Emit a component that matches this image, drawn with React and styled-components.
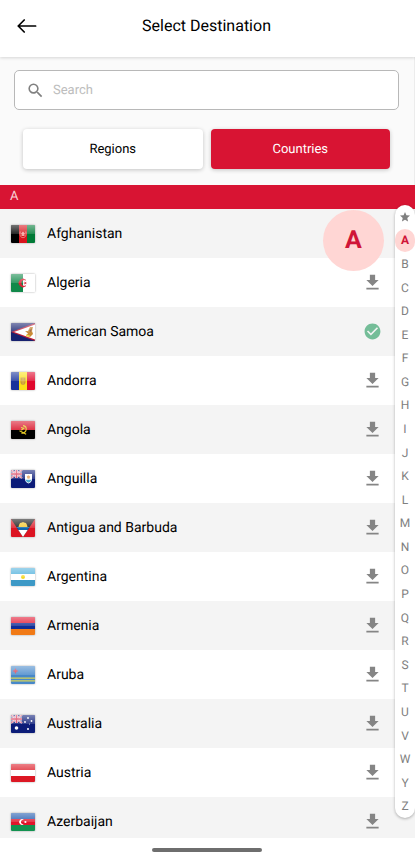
import React, { useState } from 'react';
import styled, { createGlobalStyle } from 'styled-components';
import { MdSearch, MdFileDownload, MdCheckCircle, MdStar } from 'react-icons/md';

const countries = [
  { name: 'Afghanistan', flag: 'af' },
  { name: 'Algeria', flag: 'dz' },
  { name: 'American Samoa', flag: 'as', downloaded: true },
  { name: 'Andorra', flag: 'ad' },
  { name: 'Angola', flag: 'ao' },
  { name: 'Anguilla', flag: 'ai' },
  { name: 'Antigua and Barbuda', flag: 'ag' },
  { name: 'Argentina', flag: 'ar' },
  { name: 'Armenia', flag: 'am' },
  { name: 'Aruba', flag: 'aw' },
  { name: 'Australia', flag: 'au' },
  { name: 'Austria', flag: 'at' },
  { name: 'Azerbaijan', flag: 'az' },
];

const letters = 'ABCDEFGHIJKLMNOPQRSTUVWYZ'.split('');

const Bars = ({ colors, vertical }) =>
  colors.map((color, i) =>
    vertical ? (
      <rect key={i} x={i * (24 / colors.length)} width={24 / colors.length} height="18" fill={color} />
    ) : (
      <rect key={i} y={i * (18 / colors.length)} width="24" height={18 / colors.length} fill={color} />
    )
  );

const UnionJack = () => (
  <>
    <path d="M0 0L11 8M11 0L0 8" stroke="#f3dfe8" strokeWidth="2" />
    <path d="M0 0L11 8M11 0L0 8" stroke="#d5304f" strokeWidth="0.8" />
    <path d="M5.5 0V8M0 4H11" stroke="#f3dfe8" strokeWidth="2.8" />
    <path d="M5.5 0V8M0 4H11" stroke="#d5304f" strokeWidth="1.5" />
  </>
);

const flags = {
  af: (
    <>
      <Bars vertical colors={['#000', '#d8141c', '#007a36']} />
      <path d="M9.2 6.5C8.4 11 10 12.6 12 12.6S15.6 11 14.8 6.5" fill="none" stroke="#f08a86" strokeWidth="1" />
      <path d="M10.5 11V8.2L12 6.6L13.5 8.2V11Z" fill="#f4a9a4" />
    </>
  ),
  dz: (
    <>
      <Bars vertical colors={['#11894a', '#fff']} />
      <path d="M14.8 6.2A4 4 0 1 0 14.8 11.8A3.2 3.2 0 1 1 14.8 6.2Z" fill="#dc2438" stroke="#dc2438" strokeWidth="0.6" />
      <path d="M12.2 9L15.8 7.8L13.6 10.8V7.2L15.8 10.2Z" fill="#dc2438" />
    </>
  ),
  as: (
    <>
      <rect width="24" height="18" fill="#17216f" />
      <path d="M24 0L0 9L24 18Z" fill="#bd1d36" />
      <path d="M24 1.4L3 9L24 16.6Z" fill="#fff" />
      <path d="M14 8L17 8L19 4L22 4L21 8L22 11L19 14L15 12.6L17 10.5Z" fill="#c98b35" />
      <path d="M15 11.4L19 12.6L18 14.2L15 13Z" fill="#f1d54b" />
      <path d="M18 8L21 5L20 9Z" fill="#8b4a20" />
    </>
  ),
  ad: (
    <>
      <Bars vertical colors={['#17339b', '#fbe018', '#e0082d']} />
      <path d="M9.5 5.5H14.5V10.5Q14.5 12.5 12 13Q9.5 12.5 9.5 10.5Z" fill="#c99a3b" />
      <path d="M12 6V12.5M10 9H14" stroke="#e7c24a" strokeWidth="0.7" />
    </>
  ),
  ao: (
    <>
      <Bars colors={['#d81126', '#000']} />
      <path d="M12 4.6C17 5.5 16 12 10.5 12.4M8.5 9.8L15.2 13.2M10 6.5L12.8 7.2L10.3 9.2" fill="none" stroke="#e5ca25" strokeWidth="1.1" />
    </>
  ),
  ai: (
    <>
      <rect width="24" height="18" fill="#0c1c78" />
      <UnionJack />
      <path d="M14 4H21V9Q21 12 17.5 13.5Q14 12 14 9Z" fill="#fff" />
      <path d="M14.4 9.8H20.6Q20 12 17.5 12.8Q15 12 14.4 9.8Z" fill="#52add0" />
      <path d="M15.8 6.2L17.5 5.2L19.2 6.4L18.4 8.7L16.4 8.5Z" fill="#e6a05b" />
    </>
  ),
  ag: (
    <>
      <rect width="24" height="18" fill="#dc1422" />
      <path d="M0 0H24L12 18Z" fill="#101010" />
      <path d="M5.3 8H18.7L16.7 11H7.3Z" fill="#1168ad" />
      <path d="M7.3 11H16.7L12 18Z" fill="#fff" />
      <path d="M7.5 8L8 6L9 4L11 3.6L12 3L13 3.6L15 4L16 6L16.5 8Z" fill="#f5c92c" />
    </>
  ),
  ar: (
    <>
      <Bars colors={['#4eb0dc', '#fff', '#3d99c6']} />
      <circle cx="12" cy="9" r="2" fill="#f5d928" />
    </>
  ),
  am: <Bars colors={['#e1112d', '#102d96', '#f17a16']} />,
  aw: (
    <>
      <rect width="24" height="18" fill="#4788ca" />
      <path d="M0 12.2H24M0 14.8H24" stroke="#d8d35a" strokeWidth="1.2" />
      <path d="M4.5 2.4L5.3 4.2L7.1 5L5.3 5.8L4.5 7.6L3.7 5.8L1.9 5L3.7 4.2Z" fill="#e03546" stroke="#e03546" strokeWidth="0.3" />
    </>
  ),
  au: (
    <>
      <rect width="24" height="18" fill="#0c1c78" />
      <UnionJack />
      <g fill="#fff">
        <circle cx="5.5" cy="13" r="1.8" />
        <circle cx="17" cy="3" r="0.9" />
        <circle cx="14" cy="7" r="0.9" />
        <circle cx="20.5" cy="6" r="0.9" />
        <circle cx="18.5" cy="9" r="0.5" />
        <circle cx="17" cy="14" r="1" />
      </g>
    </>
  ),
  at: <Bars colors={['#dc1824', '#fff', '#dc1824']} />,
  az: (
    <>
      <Bars colors={['#1f58ad', '#e1152b', '#139250']} />
      <path d="M13 7A2.8 2.8 0 1 0 13 11A2.2 2.2 0 1 1 13 7Z" fill="#fff" />
      <circle cx="14.4" cy="9" r="1.1" fill="#fff" />
    </>
  ),
};

const App = () => {
  const [query, setQuery] = useState('');
  const [tab, setTab] = useState('countries');
  const [active, setActive] = useState('A');

  return (
    <Screen>
      <GlobalStyle />
      <Header>
        <BackButton aria-label="Back">
          <svg width="20" height="16" viewBox="0 0 20 16" fill="none" stroke="#000" strokeWidth="1.7" strokeLinecap="round" strokeLinejoin="round">
            <path d="M18.6 8H1.5M7.2 2L1.2 8L7.2 14" />
          </svg>
        </BackButton>
        <Title>Select Destination</Title>
      </Header>

      <Filters>
        <SearchBox>
          <MdSearch size={19} />
          <SearchInput
            type="text"
            aria-label="Search"
            placeholder="Search"
            value={query}
            onChange={(e) => setQuery(e.target.value)}
          />
        </SearchBox>
        <Tabs>
          <TabButton $active={tab === 'regions'} onClick={() => setTab('regions')}>Regions</TabButton>
          <TabButton $active={tab === 'countries'} onClick={() => setTab('countries')}>Countries</TabButton>
        </Tabs>
      </Filters>

      <SectionTitle>A</SectionTitle>

      <ListArea>
        <CountryList>
          {countries.map((country) => (
            <CountryRow key={country.name}>
              <Flag>
                <svg width="24" height="18" viewBox="0 0 24 18" aria-hidden="true">
                  {flags[country.flag]}
                </svg>
              </Flag>
              <CountryName>{country.name}</CountryName>
              {country.downloaded ? (
                <RowAction $done aria-label={`${country.name} downloaded`}>
                  <MdCheckCircle size={19} />
                </RowAction>
              ) : (
                <RowAction aria-label={`Download ${country.name}`}>
                  <MdFileDownload size={21} />
                </RowAction>
              )}
            </CountryRow>
          ))}
        </CountryList>
        <LetterBubble>{active}</LetterBubble>
        <LetterIndex aria-label="Alphabet">
          <IndexItem aria-label="Favourites">
            <MdStar size={12} />
          </IndexItem>
          {letters.map((letter) => (
            <IndexItem key={letter} $active={letter === active} onClick={() => setActive(letter)}>
              {letter}
            </IndexItem>
          ))}
        </LetterIndex>
      </ListArea>

      <Footer>
        <HomeBar />
      </Footer>
    </Screen>
  );
};

export default App;

const GlobalStyle = createGlobalStyle`
  * {
    box-sizing: border-box;
  }

  body {
    margin: 0;
    background-color: #fff;
    font-family: Roboto, 'Liberation Sans', sans-serif;
    color: #000;
    text-rendering: geometricPrecision;
  }

  button,
  input {
    font-family: inherit;
    text-rendering: inherit;
  }
`;

const Screen = styled.div`
  display: flex;
  flex-direction: column;
  height: 100vh;
  overflow: hidden;
`;

const Header = styled.header`
  display: grid;
  grid-template-columns: 40px 1fr 40px;
  align-items: center;
  height: 57px;
  flex-shrink: 0;
  padding: 0 9px 6px 7px;
  background-color: #fff;
  box-shadow: 0 1px 3px rgba(0, 0, 0, 0.15);
  z-index: 1;
`;

const BackButton = styled.button`
  display: flex;
  justify-content: center;
  padding: 8px 0;
  border: none;
  background: none;
  cursor: pointer;
`;

const Title = styled.h1`
  margin: 0;
  font-size: 16px;
  font-weight: 400;
  line-height: 24px;
  text-align: center;
`;

const Filters = styled.div`
  display: flex;
  flex-direction: column;
  gap: 19px;
  flex-shrink: 0;
  padding: 13px 15px 16px 14px;
  background-color: #fafafa;
  border-right: 1px solid #ececec;
`;

const SearchBox = styled.label`
  display: flex;
  align-items: center;
  gap: 8px;
  height: 40px;
  padding: 0 11px;
  border: 1px solid #b8b8b8;
  border-radius: 5px;
  background-color: #fff;
  color: #808080;
`;

const SearchInput = styled.input`
  flex: 1;
  min-width: 0;
  padding: 0;
  border: none;
  outline: none;
  background: none;
  font-size: 13px;

  &::placeholder {
    color: #bdbdbd;
  }
`;

const Tabs = styled.div`
  display: flex;
  gap: 8px;
  padding: 0 9px;
`;

const TabButton = styled.button`
  flex: 1;
  height: 40px;
  border: none;
  border-radius: 4px;
  background-color: ${(props) => (props.$active ? '#d81433' : '#fff')};
  color: ${(props) => (props.$active ? '#fff' : '#000')};
  font-size: 13px;
  box-shadow: 0 1px 4px rgba(0, 0, 0, 0.22);
  cursor: pointer;
`;

const SectionTitle = styled.h2`
  flex-shrink: 0;
  margin: 0;
  padding: 0 10px;
  background-color: #d81433;
  color: #f8d3d8;
  font-size: 13px;
  font-weight: 400;
  line-height: 24px;
`;

const ListArea = styled.div`
  position: relative;
  flex: 1;
  min-height: 0;
`;

const CountryList = styled.ul`
  height: 100%;
  margin: 0;
  padding: 0;
  overflow: hidden;
  list-style-type: none;
`;

const CountryRow = styled.li`
  display: flex;
  align-items: center;
  gap: 12px;
  height: 49px;
  padding: 0 32px 0 11px;
  background-color: #fff;

  &:nth-child(odd) {
    background-color: #f4f4f4;
  }
`;

const Flag = styled.span`
  position: relative;
  display: flex;
  border-radius: 1px;
  overflow: hidden;
  box-shadow: 0 0 2px rgba(0, 0, 0, 0.4);

  /* glossy highlight over the upper half */
  &::after {
    content: '';
    position: absolute;
    inset: 0 0 50% 0;
    background: linear-gradient(rgba(255, 255, 255, 0.45), rgba(255, 255, 255, 0.15));
  }
`;

const CountryName = styled.span`
  flex: 1;
  font-size: 14px;
  line-height: 20px;
`;

const RowAction = styled.button`
  display: flex;
  align-items: center;
  justify-content: center;
  width: 22px;
  height: 24px;
  padding: 0;
  border: none;
  background: none;
  color: ${(props) => (props.$done ? '#74bd98' : '#858585')};
  cursor: pointer;
`;

const LetterBubble = styled.div`
  position: absolute;
  top: 1px;
  right: 31px;
  display: flex;
  align-items: center;
  justify-content: center;
  width: 61px;
  height: 61px;
  border-radius: 50%;
  background-color: #ffd6d4;
  color: #d01538;
  font-size: 25px;
  font-weight: 700;
`;

const LetterIndex = styled.nav`
  position: absolute;
  top: -4px;
  right: 0;
  bottom: 20px;
  display: flex;
  flex-direction: column;
  width: 20px;
  border-radius: 10px;
  background-color: #fff;
  box-shadow: 0 1px 3px rgba(0, 0, 0, 0.3);
`;

const IndexItem = styled.button`
  display: flex;
  flex: 1;
  align-items: center;
  justify-content: center;
  min-height: 0;
  padding: 0;
  border: none;
  border-radius: 12px;
  background-color: ${(props) => (props.$active ? '#ffd6d4' : 'transparent')};
  color: ${(props) => (props.$active ? '#d01538' : '#808080')};
  font-size: 12px;
  font-weight: ${(props) => (props.$active ? 700 : 400)};
  cursor: pointer;
`;

const Footer = styled.footer`
  display: flex;
  flex-shrink: 0;
  justify-content: center;
  height: 19px;
  padding: 10px 2px 0 0;
  background-color: #fff;
`;

const HomeBar = styled.div`
  width: 110px;
  height: 4px;
  border-radius: 2px;
  background-color: #6e6e6e;
`;
